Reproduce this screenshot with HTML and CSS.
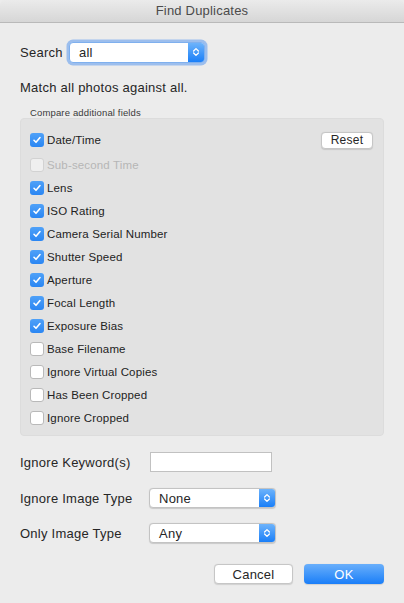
FILE: index.html
```html
<!DOCTYPE html>
<html>
<head>
<meta charset="utf-8">
<link rel="stylesheet" href="styles.css">
</head>
<body>
<div class="window">
  <div class="titlebar">Find Duplicates</div>
  <div class="content">
    <div class="search-row">
      <span class="label">Search</span>
      <div class="popup focused search-popup">
        <span class="popup-text">all</span>
        <span class="popup-arrow"><svg width="8" height="12" viewBox="0 0 8 12"><path d="M1.6 5 L4 2.6 L6.4 5 M1.6 7 L4 9.4 L6.4 7" fill="none" stroke="#fff" stroke-width="1.3" stroke-linecap="round" stroke-linejoin="round"/></svg></span>
      </div>
    </div>
    <div class="desc">Match all photos against all.</div>
    <div class="group-title">Compare additional fields</div>
    <div class="group">
      <div class="row first">
        <span class="cb checked"><svg width="14" height="14" viewBox="0 0 14 14"><path d="M4 7.3 L6 9.3 L10 4.6" fill="none" stroke="#fff" stroke-width="1.6" stroke-linecap="round" stroke-linejoin="round"/></svg></span>
        <span class="cb-label">Date/Time</span>
        <span class="spacer"></span>
        <button class="btn reset">Reset</button>
      </div>
      <div class="row disabled"><span class="cb"></span><span class="cb-label">Sub-second Time</span></div>
      <div class="row"><span class="cb checked"><svg width="14" height="14" viewBox="0 0 14 14"><path d="M4 7.3 L6 9.3 L10 4.6" fill="none" stroke="#fff" stroke-width="1.6" stroke-linecap="round" stroke-linejoin="round"/></svg></span><span class="cb-label">Lens</span></div>
      <div class="row"><span class="cb checked"><svg width="14" height="14" viewBox="0 0 14 14"><path d="M4 7.3 L6 9.3 L10 4.6" fill="none" stroke="#fff" stroke-width="1.6" stroke-linecap="round" stroke-linejoin="round"/></svg></span><span class="cb-label">ISO Rating</span></div>
      <div class="row"><span class="cb checked"><svg width="14" height="14" viewBox="0 0 14 14"><path d="M4 7.3 L6 9.3 L10 4.6" fill="none" stroke="#fff" stroke-width="1.6" stroke-linecap="round" stroke-linejoin="round"/></svg></span><span class="cb-label">Camera Serial Number</span></div>
      <div class="row"><span class="cb checked"><svg width="14" height="14" viewBox="0 0 14 14"><path d="M4 7.3 L6 9.3 L10 4.6" fill="none" stroke="#fff" stroke-width="1.6" stroke-linecap="round" stroke-linejoin="round"/></svg></span><span class="cb-label">Shutter Speed</span></div>
      <div class="row"><span class="cb checked"><svg width="14" height="14" viewBox="0 0 14 14"><path d="M4 7.3 L6 9.3 L10 4.6" fill="none" stroke="#fff" stroke-width="1.6" stroke-linecap="round" stroke-linejoin="round"/></svg></span><span class="cb-label">Aperture</span></div>
      <div class="row"><span class="cb checked"><svg width="14" height="14" viewBox="0 0 14 14"><path d="M4 7.3 L6 9.3 L10 4.6" fill="none" stroke="#fff" stroke-width="1.6" stroke-linecap="round" stroke-linejoin="round"/></svg></span><span class="cb-label">Focal Length</span></div>
      <div class="row"><span class="cb checked"><svg width="14" height="14" viewBox="0 0 14 14"><path d="M4 7.3 L6 9.3 L10 4.6" fill="none" stroke="#fff" stroke-width="1.6" stroke-linecap="round" stroke-linejoin="round"/></svg></span><span class="cb-label">Exposure Bias</span></div>
      <div class="row"><span class="cb"></span><span class="cb-label">Base Filename</span></div>
      <div class="row"><span class="cb"></span><span class="cb-label">Ignore Virtual Copies</span></div>
      <div class="row"><span class="cb"></span><span class="cb-label">Has Been Cropped</span></div>
      <div class="row"><span class="cb"></span><span class="cb-label">Ignore Cropped</span></div>
    </div>
    <div class="form-row keyword-row">
      <span class="form-label">Ignore Keyword(s)</span>
      <div class="textfield"></div>
    </div>
    <div class="form-row ignore-row">
      <span class="form-label narrow">Ignore Image Type</span>
      <div class="popup type-popup">
        <span class="popup-text">None</span>
        <span class="popup-arrow"><svg width="8" height="12" viewBox="0 0 8 12"><path d="M1.6 5 L4 2.6 L6.4 5 M1.6 7 L4 9.4 L6.4 7" fill="none" stroke="#fff" stroke-width="1.3" stroke-linecap="round" stroke-linejoin="round"/></svg></span>
      </div>
    </div>
    <div class="form-row only-row">
      <span class="form-label narrow">Only Image Type</span>
      <div class="popup type-popup">
        <span class="popup-text">Any</span>
        <span class="popup-arrow"><svg width="8" height="12" viewBox="0 0 8 12"><path d="M1.6 5 L4 2.6 L6.4 5 M1.6 7 L4 9.4 L6.4 7" fill="none" stroke="#fff" stroke-width="1.3" stroke-linecap="round" stroke-linejoin="round"/></svg></span>
      </div>
    </div>
    <div class="buttons">
      <button class="btn cancel">Cancel</button>
      <button class="btn ok">OK</button>
    </div>
  </div>
</div>
</body>
</html>
```
FILE: styles.css
```css
* { box-sizing: border-box; }
html, body { margin: 0; padding: 0; }
body {
  font-family: "Liberation Sans", Arial, sans-serif;
  font-size: 13px;
  letter-spacing: 0.25px;
  color: #262626;
  background: #ececec;
}
.window {
  width: 404px;
  height: 603px;
  background: #ececec;
  display: flex;
  flex-direction: column;
  border-radius: 5px 5px 0 0;
  overflow: hidden;
}
.titlebar {
  height: 23px;
  flex: none;
  background: linear-gradient(#ebebeb, #d6d6d6);
  border-bottom: 1px solid #b9b9b9;
  text-align: center;
  line-height: 22px;
  font-size: 13px;
  letter-spacing: 0.2px;
  color: #4b4b4b;
}
.content {
  display: flex;
  flex-direction: column;
  padding: 0 20px;
}
.search-row {
  margin-top: 18px;
  height: 22px;
  display: flex;
  align-items: center;
}
.label { width: 49px; }
.popup {
  position: relative;
  height: 21px;
  background: #fff;
  border: 1px solid #c3c3c3;
  border-radius: 4px;
  display: flex;
  align-items: center;
  overflow: hidden;
  box-shadow: 0 0.5px 1px rgba(0,0,0,0.15);
}
.popup.focused {
  border-color: #7fb0ee;
  box-shadow: 0 0 0 2.5px rgba(104, 160, 238, 0.6);
}
.search-popup { width: 136px; }
.popup-text { flex: 1; padding-left: 9px; }
.popup-arrow {
  width: 16px;
  align-self: stretch;
  background: linear-gradient(#6db3fb, #1a7ff8);
  display: flex;
  align-items: center;
  justify-content: center;
}
.desc {
  margin-top: 16px;
  height: 18px;
  line-height: 18px;
}
.group-title {
  margin-top: 10px;
  margin-left: 10px;
  font-size: 9.5px;
  letter-spacing: 0.15px;
  height: 11px;
  line-height: 11px;
  color: #3a3a3a;
}
.group {
  margin-top: 0;
  background: #e2e2e2;
  border: 1px solid #dcdcdc;
  border-radius: 4px;
  padding: 8px 10px 6px 9px;
  display: flex;
  flex-direction: column;
}
.row {
  height: 23px;
  display: flex;
  align-items: center;
  font-size: 11.5px;
  letter-spacing: 0.15px;
  color: #222;
}
.row.first { height: 26px; }
.spacer { flex: 1; }
.cb {
  width: 14px;
  height: 14px;
  border-radius: 3px;
  background: #fff;
  border: 1px solid #b9b9b9;
  margin-right: 3px;
  flex: none;
  display: flex;
}
.cb.checked {
  border: none;
  background: linear-gradient(#4fa1f8, #2a86f3);
}
.row.disabled .cb {
  background: #efefef;
  border-color: #d2d2d2;
}
.row.disabled .cb-label { color: #b6b6b6; }
.btn {
  font-family: "Liberation Sans", Arial, sans-serif;
  font-size: 13px;
  letter-spacing: 0.25px;
  height: 20px;
  border-radius: 4px;
  background: #fff;
  border: 1px solid #c6c6c6;
  color: #262626;
  padding: 0;
  box-shadow: 0 0.5px 1px rgba(0,0,0,0.12);
}
.reset { width: 52px; height: 17px; font-size: 12px; }
.form-row {
  display: flex;
  align-items: center;
  height: 20px;
}
.keyword-row { margin-top: 16px; }
.ignore-row { margin-top: 16px; }
.only-row { margin-top: 15px; }
.form-label { width: 130px; }
.form-label.narrow { width: 129px; }
.textfield {
  width: 122px;
  height: 20px;
  background: #fff;
  border: 1px solid #c1c1c1;
}
.type-popup { width: 127px; height: 20px; }
.buttons {
  margin-top: 21px;
  display: flex;
  justify-content: flex-end;
  gap: 11px;
}
.cancel { width: 79px; }
.ok {
  width: 80px;
  color: #fff;
  border: none;
  background: linear-gradient(#69affb, #1a7ef8);
}
```
